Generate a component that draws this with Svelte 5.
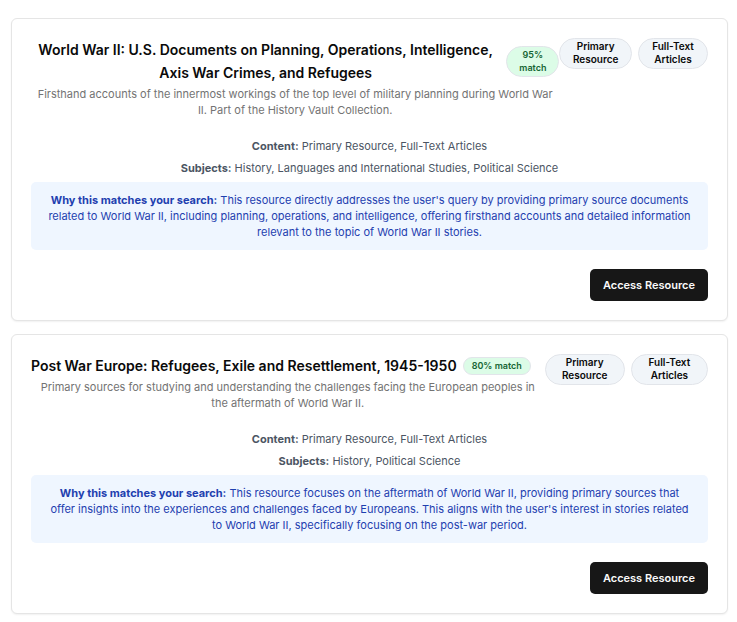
<script>
  const resources = [
    {
      title: 'World War II: U.S. Documents on Planning, Operations, Intelligence, Axis War Crimes, and Refugees',
      match: 95,
      description:
        'Firsthand accounts of the innermost workings of the top level of military planning during World War II. Part of the History Vault Collection.',
      content: ['Primary Resource', 'Full-Text Articles'],
      subjects: ['History', 'Languages and International Studies', 'Political Science'],
      reason:
        "This resource directly addresses the user's query by providing primary source documents related to World War II, including planning, operations, and intelligence, offering firsthand accounts and detailed information relevant to the topic of World War II stories."
    },
    {
      title: 'Post War Europe: Refugees, Exile and Resettlement, 1945-1950',
      match: 80,
      description:
        'Primary sources for studying and understanding the challenges facing the European peoples in the aftermath of World War II.',
      content: ['Primary Resource', 'Full-Text Articles'],
      subjects: ['History', 'Political Science'],
      reason:
        "This resource focuses on the aftermath of World War II, providing primary sources that offer insights into the experiences and challenges faced by Europeans. This aligns with the user's interest in stories related to World War II, specifically focusing on the post-war period."
    }
  ];
</script>

<main class="results">
  {#each resources as resource}
    <article class="card">
      <header>
        <div class="summary">
          <div class="heading">
            <h3>{resource.title}</h3>
            <span class="badge match">{resource.match}% match</span>
          </div>
          <p class="description">{resource.description}</p>
        </div>
        <div class="tags">
          {#each resource.content as tag}
            <span class="badge">{tag}</span>
          {/each}
        </div>
      </header>
      <div class="details">
        <p><strong>Content:</strong> {resource.content.join(', ')}</p>
        <p><strong>Subjects:</strong> {resource.subjects.join(', ')}</p>
        <p class="reason"><strong>Why this matches your search:</strong> {resource.reason}</p>
      </div>
      <footer>
        <button type="button">Access Resource</button>
      </footer>
    </article>
  {/each}
</main>

<style>
  :global(body) {
    margin: 0;
    background: #fff;
  }
  .results {
    display: flex;
    flex-direction: column;
    gap: 13px;
    padding: 18px 9px 8px 11px;
    font-family: Inter, 'Liberation Sans', sans-serif;
    font-size: 11px;
    line-height: 16px;
    text-align: center;
    color: #0a0a0a;
  }
  .card {
    display: flex;
    flex-direction: column;
    padding: 19px;
    border: 1px solid #e5e5e5;
    border-radius: 6px;
    background: #fff;
    box-shadow: 0 1px 2px rgb(0 0 0 / 0.06);
  }
  h3,
  p {
    margin: 0;
  }
  header {
    display: flex;
    align-items: flex-start;
    justify-content: space-between;
  }
  .summary {
    display: flex;
    flex-direction: column;
    gap: 2px;
  }
  .heading {
    display: flex;
    align-items: center;
    gap: 6px;
  }
  h3 {
    font-size: 14px;
    font-weight: 600;
    line-height: 23px;
  }
  .description {
    padding: 0 4px;
    color: #737373;
  }
  .tags {
    display: flex;
    gap: 6px;
  }
  .badge {
    display: flex;
    align-items: center;
    padding: 1px 8px 2px;
    border: 1px solid #e2e5ea;
    border-radius: 16px;
    background: #f1f5f9;
    font-size: 10px;
    font-weight: 600;
    line-height: 13px;
  }
  .match {
    background: #dcfce7;
    color: #166534;
    font-size: 9px;
  }
  .details {
    display: flex;
    flex-direction: column;
    gap: 6px;
    padding: 20px 0 19px;
    color: #4b5563;
  }
  .reason {
    padding: 10px 16px;
    border-radius: 5px;
    background: #eff6ff;
    color: #1e40af;
  }
  footer {
    display: flex;
    justify-content: flex-end;
  }
  button {
    height: 32px;
    padding: 0 13px;
    border: 0;
    border-radius: 5px;
    background: #171717;
    color: #fafafa;
    font: 600 11px/16px Inter, 'Liberation Sans', sans-serif;
  }
</style>
